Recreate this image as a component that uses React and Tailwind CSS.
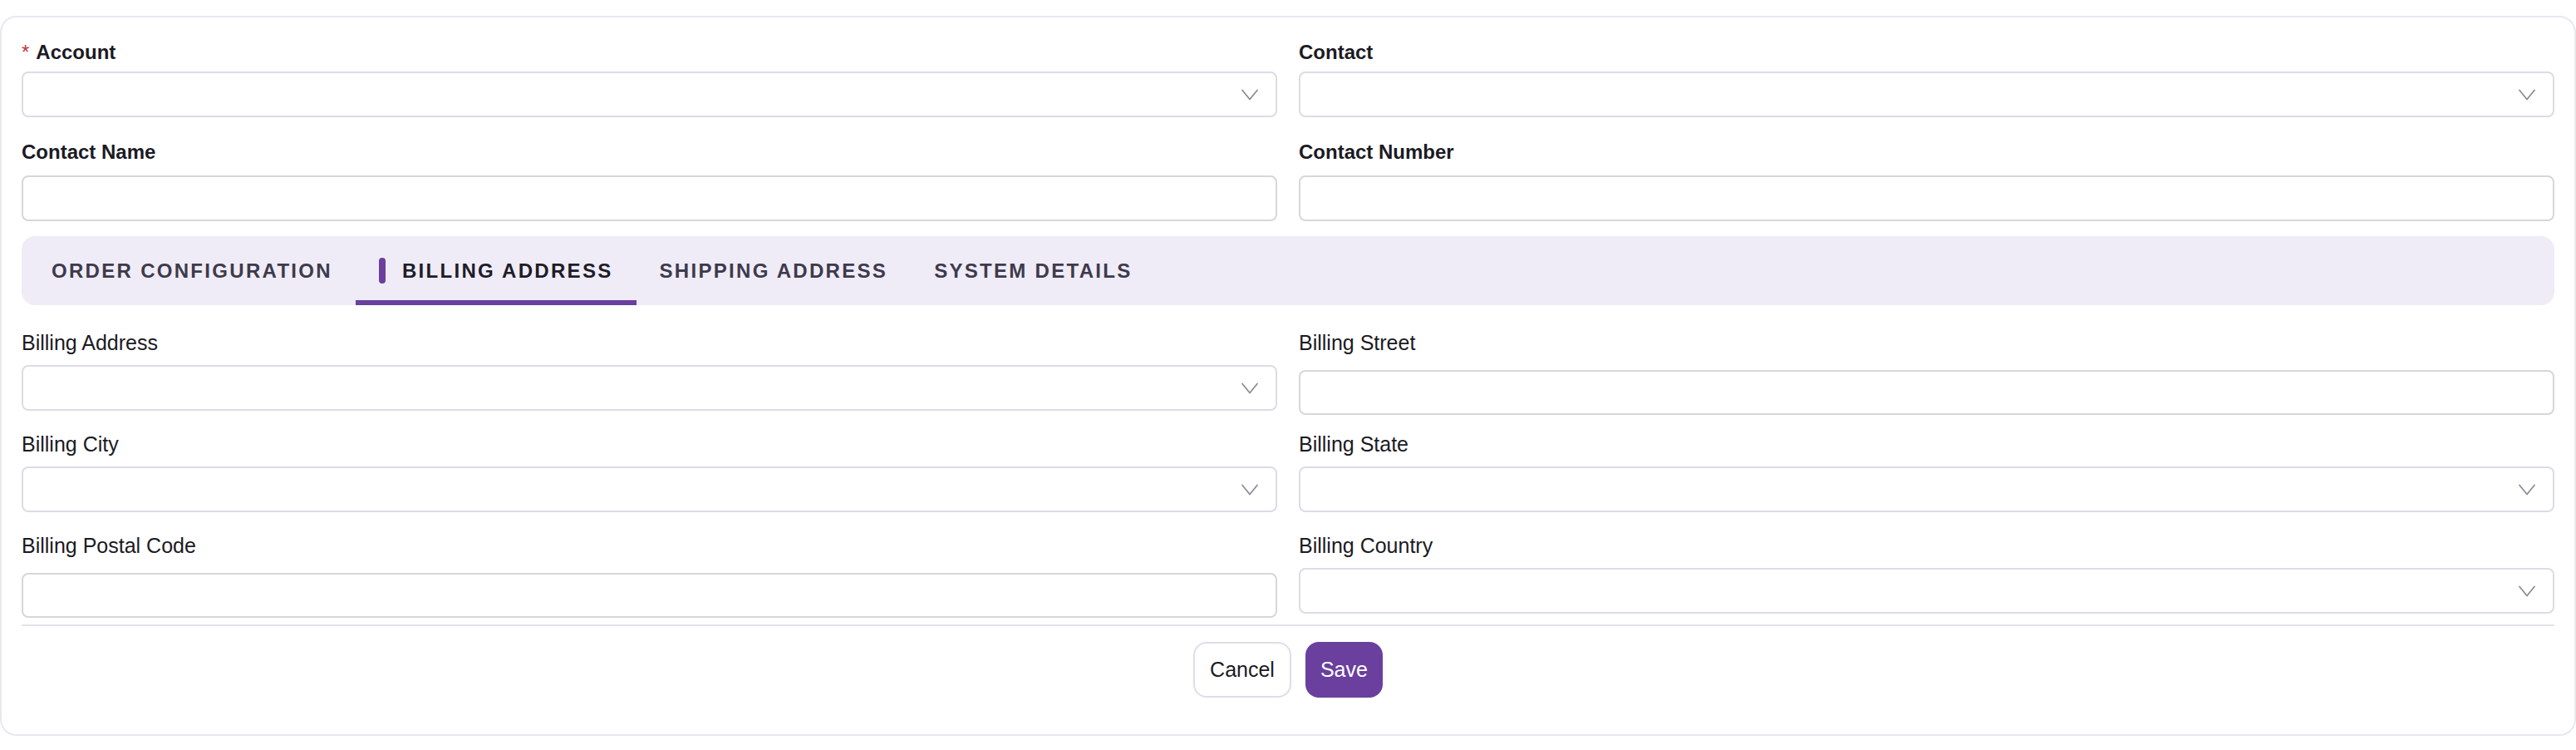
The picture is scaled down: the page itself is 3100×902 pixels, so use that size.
import React from 'react';

const Chevron = () => (
  <svg width="20" height="14" viewBox="0 0 20 14" fill="none">
    <polyline points="1,1.5 10,12.5 19,1.5" stroke="#8b8898" strokeWidth="1.7" strokeLinecap="round" strokeLinejoin="round" />
  </svg>
);

const SelectBox = ({ className = '' }) => (
  <div className={`h-[55px] w-full rounded-[8px] border-2 border-[#dddbe7] bg-white flex items-center justify-end pr-[21px] ${className}`}>
    <Chevron />
  </div>
);

const TextBox = ({ className = '' }) => (
  <input type="text" className={`block h-[55px] w-full rounded-[8px] border-2 border-[#d7d6db] bg-white outline-none ${className}`} />
);

const TopField = ({ label, required, select, mt }) => (
  <div className="flex flex-col">
    <label className="text-[24px] leading-[32px] font-bold text-[#1c1a24] flex items-start">
      {required && <span className="text-[#c2323c] font-normal mr-[8px]">*</span>}
      {label}
    </label>
    {select ? <SelectBox className={mt} /> : <TextBox className={mt} />}
  </div>
);

const BillingField = ({ label, select }) => (
  <div className="flex flex-col h-[103px]">
    <label className="text-[25px] leading-[32px] text-[#1c1a24]">{label}</label>
    {select ? <SelectBox className="mt-[11px]" /> : <TextBox className="mt-[17px]" />}
  </div>
);

const tabs = ['ORDER CONFIGURATION', 'BILLING ADDRESS', 'SHIPPING ADDRESS', 'SYSTEM DETAILS'];

export default function App() {
  const active = 'BILLING ADDRESS';

  return (
    <div className="min-h-screen bg-white pt-[19px]" style={{ fontFamily: '"Liberation Sans", Arial, sans-serif' }}>
      <div className="rounded-[20px] border-2 border-[#e9e7f0] bg-white px-[24px] pt-[26px] pb-[44px]">
        {/* header fields */}
        <div className="grid grid-cols-2 gap-x-[26px] gap-y-[26px]">
          <TopField label="Account" required select mt="mt-[7px]" />
          <TopField label="Contact" select mt="mt-[7px]" />
          <TopField label="Contact Name" mt="mt-[12px]" />
          <TopField label="Contact Number" mt="mt-[12px]" />
        </div>

        {/* tabs */}
        <div className="mt-[18px] h-[83px] rounded-[16px] bg-[#efecf7] flex px-[8px]">
          {tabs.map((t) => (
            <div
              key={t}
              className={`h-full flex items-center gap-[20px] px-[28px] pt-[6px] border-b-[6px] ${
                t === active ? 'border-[#6a3f9e] text-[#1f1c29]' : 'border-transparent text-[#3e3a4c]'
              }`}
            >
              {t === active && <span className="w-[8px] h-[31px] rounded-full bg-[#6a3f9e]" />}
              <span className="text-[24px] font-bold tracking-[2.3px] leading-none">{t}</span>
            </div>
          ))}
        </div>

        {/* billing fields */}
        <div className="mt-[29px] grid grid-cols-2 gap-x-[26px] gap-y-[19px]">
          <BillingField label="Billing Address" select />
          <BillingField label="Billing Street" />
          <BillingField label="Billing City" select />
          <BillingField label="Billing State" select />
          <BillingField label="Billing Postal Code" />
          <BillingField label="Billing Country" select />
        </div>

        <div className="mt-[8px] h-[2px] bg-[#e2e0ea]" />

        <div className="mt-[19px] flex justify-center gap-[17px]">
          <button className="h-[67px] px-[18px] rounded-[16px] border-2 border-[#dfdde9] bg-white text-[25px] text-[#1c1a24]">
            Cancel
          </button>
          <button className="h-[67px] px-[18px] rounded-[16px] bg-[#6a3f9e] text-[25px] text-white">
            Save
          </button>
        </div>
      </div>
    </div>
  );
}
